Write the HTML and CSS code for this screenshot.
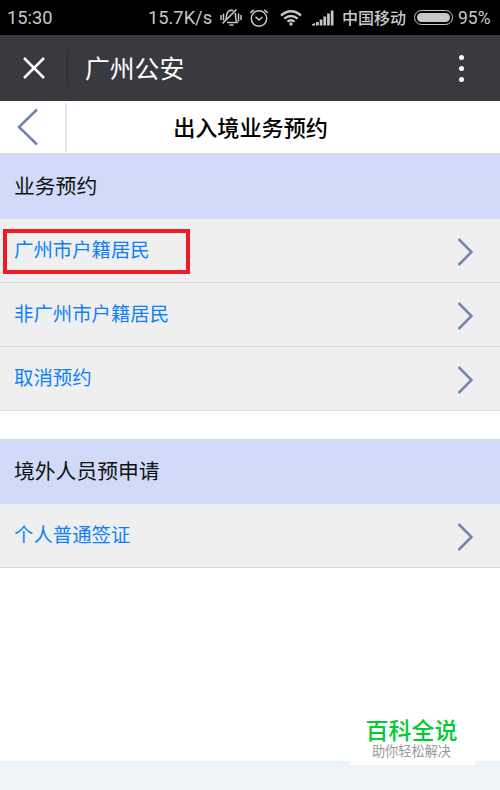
FILE: index.html
```
<!DOCTYPE html>
<html lang="zh-CN">
<head>
    <meta charset="UTF-8">
    <meta name="viewport" content="width=device-width, initial-scale=1.0">
    <title>广州公安</title>
    <link rel="stylesheet" href="styles.css">
</head>
<body>
    <div class="status-bar">
        <span class="time">15:30</span>
        <span class="speed">15.7K/s</span>
        <svg class="icon-mute" width="22" height="20" viewBox="0 0 22 20">
            <path d="M5.500 12.500C6.800 11 6 8 7 5.500C8 2.500 11 1.500 13.500 2.800M15.200 5C16 8 15 11.500 17 14.500H7M9.500 17h4M2.500 15.500L16.500 1.500M1 7v5M3.500 5.500v7M18.500 5.500v8M21 7v5"/>
        </svg>
        <svg class="icon-alarm" width="20" height="20" viewBox="0 0 20 20">
            <circle cx="10" cy="10.500" r="7.700"/>
            <path d="M6.500 8.700L10 12L13.500 9M1.200 4.800L4.800 1.800M18.800 4.800L15.200 1.800"/>
        </svg>
        <svg class="icon-wifi" width="22" height="18" viewBox="0 0 22 18">
            <path d="M1 6.500Q11-1.800 21 6.500M4.300 9.600Q11 4.200 17.700 9.600M7.500 12.600Q11 10 14.500 12.600"/>
            <circle cx="11" cy="15" r="1.700"/>
        </svg>
        <svg class="icon-signal" width="22" height="16" viewBox="0 0 22 16">
            <path d="M0 15.500v-1.200l3-1.300v2.500zM4 12h2.700v3.500H4zM7.700 9.500h2.700v6H7.700zM11.400 6.500h2.700v9h-2.700zM15.100 3.500h2.700v12h-2.700zM18.800.5h2.700v15h-2.700z"/>
        </svg>
        <span class="carrier">中国移动</span>
        <span class="battery"><span class="battery-level"></span></span>
        <span class="percent">95%</span>
    </div>

    <div class="nav-bar">
        <svg class="close" width="22" height="22" viewBox="0 0 22 22">
            <path d="M1 1L21 21M21 1L1 21"/>
        </svg>
        <span class="nav-title">广州公安</span>
        <div class="more">
            <span></span>
            <span></span>
            <span></span>
        </div>
    </div>

    <div class="page-header">
        <a class="back" href="#">
            <svg width="22" height="38" viewBox="0 0 22 38">
                <path d="M20 1.500L2 19L20 36.500"/>
            </svg>
        </a>
        <h1>出入境业务预约</h1>
    </div>

    <div class="content">
        <h2>业务预约</h2>
        <ul class="list">
            <li>
                <a class="marked" href="#">广州市户籍居民</a>
                <svg class="arrow" width="16" height="30" viewBox="0 0 16 30"><path d="M1.500 2L14.500 15L1.500 28"/></svg>
            </li>
            <li>
                <a href="#">非广州市户籍居民</a>
                <svg class="arrow" width="16" height="30" viewBox="0 0 16 30"><path d="M1.500 2L14.500 15L1.500 28"/></svg>
            </li>
            <li>
                <a href="#">取消预约</a>
                <svg class="arrow" width="16" height="30" viewBox="0 0 16 30"><path d="M1.500 2L14.500 15L1.500 28"/></svg>
            </li>
        </ul>
        <h2>境外人员预申请</h2>
        <ul class="list">
            <li>
                <a href="#">个人普通签证</a>
                <svg class="arrow" width="16" height="30" viewBox="0 0 16 30"><path d="M1.500 2L14.500 15L1.500 28"/></svg>
            </li>
        </ul>
    </div>

    <div class="watermark">
        <strong>百科全说</strong>
        <span>助你轻松解决</span>
    </div>
</body>
</html>
```
FILE: styles.css
```
* {
    box-sizing: border-box;
}

body {
    margin: 0;
    height: 790px;
    overflow: hidden;
    background-color: #eef3f8;
    font-family: "Noto Sans CJK SC", sans-serif;
    position: relative;
}

/* status bar */
.status-bar {
    display: flex;
    align-items: center;
    height: 35px;
    background-color: #000;
    color: #c8c8c8;
    font-family: Roboto, "Noto Sans CJK SC", sans-serif;
    font-size: 18.3px;
    padding: 0 8px 0 7px;
    white-space: nowrap;
}

.status-bar svg {
    flex: none;
    fill: none;
    stroke: #c8c8c8;
    stroke-width: 1.5;
}

.time {
    width: 141px;
}

.speed {
    width: 72px;
}

.icon-alarm {
    margin-left: 7px;
}

.status-bar .icon-wifi {
    margin-left: 11px;
    stroke-width: 2.4;
}

.icon-wifi circle {
    fill: #c8c8c8;
    stroke: none;
}

.status-bar .icon-signal {
    margin-left: 10px;
    fill: #c8c8c8;
    stroke: none;
}

.carrier {
    margin-left: 8px;
    width: 72px;
    padding-bottom: 2px;
    font-size: 16px;
    font-weight: 500;
}

.battery {
    width: 39px;
    height: 15px;
    border: 1.5px solid #c8c8c8;
    border-radius: 8px;
    padding: 2px;
}

.battery-level {
    display: block;
    height: 100%;
    border-radius: 5px;
    background-color: #c8c8c8;
}

.percent {
    margin-left: 5px;
    font-size: 17.5px;
}

/* top navigation */
.nav-bar {
    display: flex;
    align-items: center;
    height: 66px;
    background-color: #393a3f;
    color: #fff;
    padding: 0 36px 0 23px;
}

.close {
    stroke: #fff;
    stroke-width: 2.5;
}

.nav-title {
    height: 33px;
    margin-left: 22px;
    padding-left: 17px;
    border-left: 1px solid #2c2d31;
    font-size: 24.8px;
    line-height: 31px;
}

.more {
    display: flex;
    flex-direction: column;
    gap: 6px;
    margin-left: auto;
}

.more span {
    width: 5px;
    height: 5px;
    border-radius: 50%;
    background-color: #fff;
}

/* page header */
.page-header {
    display: flex;
    align-items: center;
    height: 53px;
    background-color: #fff;
    border-bottom: 1px solid #dfdfe8;
}

.back {
    display: flex;
    align-items: center;
    width: 67px;
    height: 49px;
    padding-left: 17px;
    border-right: 2px solid #e6e6f0;
}

.back svg,
.arrow {
    fill: none;
    stroke: #7186b1;
    stroke-width: 2.6;
}

h1 {
    flex: 1;
    margin: 0;
    padding: 0 66px 2px 0;
    text-align: center;
    font-size: 22.1px;
    font-weight: 500;
    color: #000;
}

/* list */
.content {
    height: 607px;
    background-color: #fff;
}

h2 {
    margin: 0;
    height: 65px;
    line-height: 62px;
    padding-left: 14px;
    background-color: #d0dbf9;
    color: #111;
    font-size: 20.8px;
    font-weight: 400;
}

.list {
    list-style: none;
    margin: 0 0 28px;
    padding: 0;
}

.list li {
    display: flex;
    align-items: center;
    justify-content: space-between;
    height: 64px;
    padding: 3px 27px 0 14px;
    background-color: #efefef;
    border-bottom: 1px solid #d9d9d9;
}

.list a {
    position: relative;
    padding-bottom: 8px;
    color: #0f80fb;
    font-size: 19.4px;
    text-decoration: none;
}

.marked::after {
    content: "";
    box-sizing: border-box;
    position: absolute;
    left: -11px;
    top: -5px;
    width: 187px;
    height: 45px;
    border: 4px solid #ed1c24;
}

.watermark {
    position: absolute;
    left: 350px;
    top: 710px;
    width: 125px;
    height: 55px;
    padding: 1px 2px 0 0;
    background-color: #fff;
    display: flex;
    flex-direction: column;
    align-items: center;
}

.watermark strong {
    color: #00cb33;
    font-size: 23px;
    line-height: 36px;
    font-weight: 500;
}

.watermark span {
    margin-top: -5px;
    color: #999;
    font-size: 13.2px;
    line-height: 18px;
}
```
